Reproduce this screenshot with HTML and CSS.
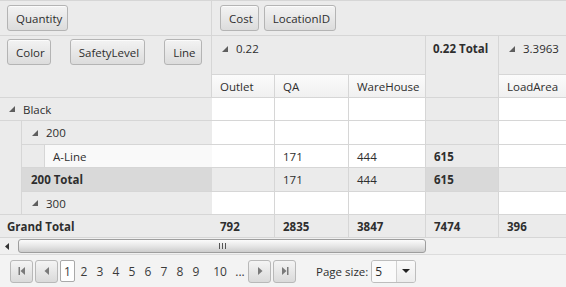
FILE: index.html
```html
<!DOCTYPE html>
<html lang="en">

<head>
    <meta charset="UTF-8" />
    <title>Pivot Grid</title>
    <link rel="stylesheet" href="styles.css">
</head>

<body>
    <div class="pivot">
        <div class="pivot-top">
            <div class="fields fields-data">
                <span class="field-btn">Quantity</span>
            </div>
            <div class="fields fields-cols">
                <span class="field-btn">Cost</span>
                <span class="field-btn">LocationID</span>
            </div>

            <div class="fields fields-rows">
                <span class="field-btn">Color</span>
                <span class="field-btn">SafetyLevel</span>
                <span class="field-btn">Line</span>
            </div>
            <div class="col-headers">
                <div class="cell top span3"><svg class="tri" viewBox="0 0 6 6"><polygon points="6,0 6,6 0,6" /></svg>0.22</div>
                <div class="cell top total tall">0.22 Total</div>
                <div class="cell top"><svg class="tri" viewBox="0 0 6 6"><polygon points="6,0 6,6 0,6" /></svg>3.3963</div>
                <div class="cell leaf">Outlet</div>
                <div class="cell leaf">QA</div>
                <div class="cell leaf">WareHouse</div>
                <div class="cell leaf">LoadArea</div>
            </div>

            <div class="row-headers">
                <div class="rh full"><svg class="tri" viewBox="0 0 6 6"><polygon points="6,0 6,6 0,6" /></svg>Black</div>
                <div class="rh spacer s1"></div>
                <div class="rh lvl2 r2"><svg class="tri" viewBox="0 0 6 6"><polygon points="6,0 6,6 0,6" /></svg>200</div>
                <div class="rh spacer s2"></div>
                <div class="rh leaf-row">A-Line</div>
                <div class="rh lvl2 r4 subtotal">200 Total</div>
                <div class="rh lvl2 r5"><svg class="tri" viewBox="0 0 6 6"><polygon points="6,0 6,6 0,6" /></svg>300</div>
                <div class="rh full grand">Grand Total</div>
            </div>
            <div class="data">
                <div class="d"></div><div class="d"></div><div class="d"></div><div class="d tot"></div><div class="d"></div>
                <div class="d"></div><div class="d"></div><div class="d"></div><div class="d tot"></div><div class="d"></div>
                <div class="d"></div><div class="d">171</div><div class="d">444</div><div class="d tot b">615</div><div class="d"></div>
                <div class="d sub"></div><div class="d sub">171</div><div class="d sub">444</div><div class="d subtot b">615</div><div class="d sub"></div>
                <div class="d"></div><div class="d"></div><div class="d"></div><div class="d tot"></div><div class="d"></div>
                <div class="d sub b">792</div><div class="d sub b">2835</div><div class="d sub b">3847</div><div class="d sub b">7474</div><div class="d sub b">396</div>
            </div>
        </div>

        <div class="hscroll">
            <svg class="scroll-arrow" viewBox="0 0 4 7"><polygon points="4,0 4,7 0,3.5" /></svg>
            <div class="thumb"><span class="grip"></span></div>
        </div>

        <div class="pager">
            <span class="pg-btn"><svg viewBox="0 0 10 10"><rect x="1.5" y="1" width="1.5" height="8" /><polygon points="8,1 8,9 3.5,5" /></svg></span>
            <span class="pg-btn"><svg viewBox="0 0 10 10"><polygon points="7,1 7,9 2.5,5" /></svg></span>
            <ul class="pages">
                <li class="current">1</li>
                <li>2</li>
                <li>3</li>
                <li>4</li>
                <li>5</li>
                <li>6</li>
                <li>7</li>
                <li>8</li>
                <li>9</li>
                <li class="ten">10</li>
                <li class="more">...</li>
            </ul>
            <span class="pg-btn"><svg viewBox="0 0 10 10"><polygon points="3,1 3,9 7.5,5" /></svg></span>
            <span class="pg-btn"><svg viewBox="0 0 10 10"><polygon points="2,1 2,9 6.5,5" /><rect x="7" y="1" width="1.5" height="8" /></svg></span>
            <span class="page-size">Page size:</span>
            <span class="dropdown">
                <span class="dd-value">5</span>
                <span class="dd-arrow"><svg viewBox="0 0 8 4"><polygon points="0,0 8,0 4,4" /></svg></span>
            </span>
        </div>
    </div>
</body>

</html>
```

FILE: styles.css
```css
* {
    margin: 0;
    padding: 0;
    box-sizing: border-box;
}

body {
    width: 566px;
    height: 287px;
    overflow: hidden;
    font-family: "Open Sans", "Segoe UI", sans-serif;
    font-size: 11.5px;
    color: #2e2e2e;
    background: #fff;
}

.pivot {
    border-top: 1px solid #d6d6d6;
    overflow: hidden;
}

.pivot-top {
    display: grid;
    grid-template-columns: 212px 354px;
    grid-template-rows: 35px 62px auto;
}

/* zone des champs */
.fields {
    display: flex;
    align-items: flex-start;
    background: #ebebeb;
    border-bottom: 1px solid #d6d6d6;
}

.fields-data {
    padding: 4px 0 0 7px;
    border-right: 1px solid #d6d6d6;
}

.fields-cols {
    padding: 4px 0 0 8px;
    gap: 5px;
}

.fields-rows {
    padding: 3px 0 0 7px;
    gap: 19px;
    border-right: 1px solid #d6d6d6;
}

.field-btn {
    display: inline-flex;
    align-items: center;
    height: 26px;
    padding: 0 5px 0 8px;
    border: 1px solid #b4b4b4;
    border-radius: 3px;
    background: linear-gradient(#f3f3f3, #dcdcdc);
    box-shadow: inset 0 1px 0 rgba(255, 255, 255, 0.7);
    color: #2e2e2e;
    white-space: nowrap;
}

/* en-têtes de colonnes */
.col-headers {
    display: grid;
    grid-template-columns: 63px 74px 77px 73px 90px;
    grid-template-rows: 39px 23px;
    overflow: hidden;
    border-bottom: 1px solid #d6d6d6;
}

.cell {
    border-right: 1px solid #d6d6d6;
    white-space: nowrap;
    display: flex;
    align-items: flex-start;
}

.cell.top {
    background: #ebebeb;
    padding: 5px 0 0 10px;
    border-bottom: 1px solid #d6d6d6;
}

.span3 {
    grid-column: 1 / 4;
}

.cell.total {
    font-weight: bold;
    padding-left: 7px;
}

.tall {
    grid-row: 1 / 3;
    grid-column: 4;
    border-bottom: none;
}

.cell.leaf {
    align-items: center;
    padding-left: 8px;
    background: linear-gradient(#fbfbfb, #f0f0f0);
}

.tri {
    width: 6px;
    height: 6px;
    margin: 5px 8px 0 0;
    fill: #5e5e5e;
    flex-shrink: 0;
}

/* en-têtes de lignes */
.row-headers {
    display: grid;
    grid-template-columns: 22px 23px 167px;
    grid-template-rows: 23px 24px 23px 24px 23px 23px;
    border-right: 1px solid #d6d6d6;
}

.rh {
    display: flex;
    align-items: center;
    background: #ebebeb;
    border-bottom: 1px solid #d6d6d6;
    white-space: nowrap;
}

.rh .tri {
    margin-top: 0;
}

.rh.full {
    grid-column: 1 / 4;
    padding-left: 9px;
}

.rh.spacer {
    border-right: 1px solid #d6d6d6;
}

.s1 {
    grid-column: 1;
    grid-row: 2 / 6;
}

.s2 {
    grid-column: 2;
    grid-row: 3;
}

.rh.lvl2 {
    grid-column: 2 / 4;
    padding-left: 10px;
}

.r2 {
    grid-row: 2;
}

.r4 {
    grid-row: 4;
}

.r5 {
    grid-row: 5;
}

.rh.leaf-row {
    grid-column: 3;
    grid-row: 3;
    background: #f9f9f9;
    padding-left: 8px;
}

.rh.subtotal {
    background: #d9d9d9;
    font-weight: bold;
    padding-left: 9px;
}

.rh.grand {
    grid-row: 6;
    font-weight: bold;
    padding-left: 7px;
}

/* cellules de données */
.data {
    display: grid;
    grid-template-columns: 63px 74px 77px 73px 90px;
    grid-template-rows: 23px 24px 23px 24px 23px 23px;
    overflow: hidden;
}

.d {
    display: flex;
    align-items: center;
    padding-left: 8px;
    border-right: 1px solid #d6d6d6;
    border-bottom: 1px solid #d6d6d6;
    background: #fff;
}

.d.tot,
.d.sub {
    background: #ebebeb;
}

.d.subtot {
    background: #d9d9d9;
}

.d.b {
    font-weight: bold;
}

/* barre de défilement */
.hscroll {
    display: flex;
    align-items: center;
    height: 17px;
    background: #f0f0f0;
    border-bottom: 1px solid #dcdcdc;
}

.scroll-arrow {
    width: 4px;
    height: 7px;
    margin: 0 9px 0 5px;
    fill: #333;
}

.thumb {
    width: 408px;
    height: 14px;
    border: 1px solid #9e9e9e;
    border-radius: 3px;
    background: linear-gradient(#fbfbfb, #e6e6e6 50%, #cdcdcd);
    display: flex;
    justify-content: center;
    align-items: center;
}

.grip {
    width: 7px;
    height: 6px;
    background: repeating-linear-gradient(90deg, #555 0 1px, transparent 1px 3px);
}

/* pagination */
.pager {
    display: flex;
    align-items: center;
    height: 32px;
    padding: 0 0 0 10px;
    background: #f3f3f3;
}

.pg-btn {
    display: inline-flex;
    align-items: center;
    justify-content: center;
    width: 23px;
    height: 23px;
    margin-right: 2px;
    border: 1px solid #b8b8b8;
    border-radius: 3px;
    background: linear-gradient(#f4f4f4, #dadada);
}

.pg-btn svg {
    width: 10px;
    height: 10px;
    fill: #7a7a7a;
}

.pages {
    display: flex;
    align-items: center;
    list-style: none;
}

.pages li {
    width: 16px;
    height: 22px;
    display: flex;
    align-items: center;
    justify-content: center;
    font-size: 12px;
    color: #3a3a3a;
}

.pages li.ten {
    width: 24px;
    margin-left: 4px;
}

.pages li.more {
    width: 16px;
}

.pages li.current {
    width: 15px;
    margin-right: 1px;
    background: #fff;
    border: 1px solid #a9a9a9;
    border-radius: 2px;
}

.page-size {
    margin: 0 3px 0 18px;
    font-size: 11.5px;
}

.dropdown {
    display: inline-flex;
    height: 23px;
    width: 45px;
    border: 1px solid #bdbdbd;
    border-radius: 3px;
    overflow: hidden;
}

.dd-value {
    flex: 1;
    display: flex;
    align-items: center;
    padding-left: 3px;
    font-size: 12px;
    background: #fafafa;
    border-right: 1px solid #d0d0d0;
}

.dd-arrow {
    width: 18px;
    display: flex;
    align-items: center;
    justify-content: center;
    background: linear-gradient(#fafafa, #ececec);
}

.dd-arrow svg {
    width: 8px;
    height: 4px;
    fill: #222;
}
```
